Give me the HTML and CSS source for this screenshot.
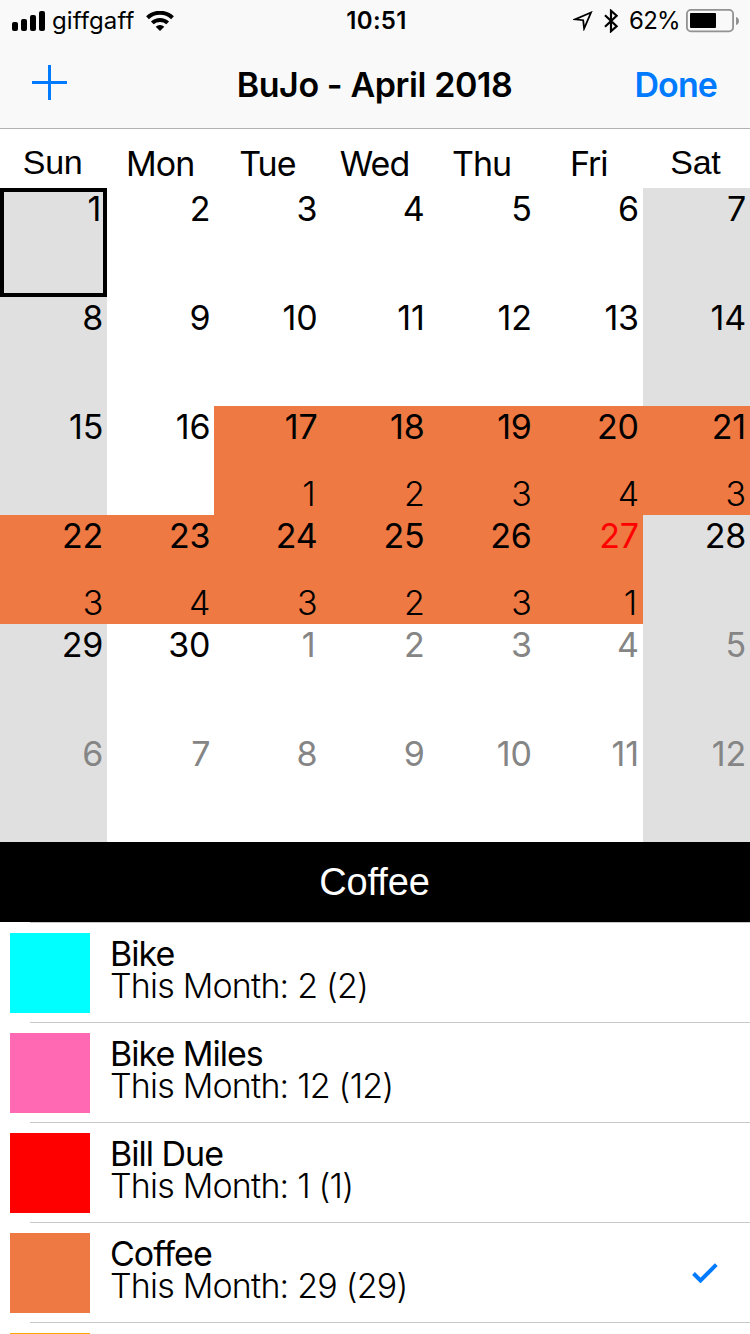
FILE: index.html
```html
<!DOCTYPE html>
<html lang="en">
<head>
    <meta charset="UTF-8">
    <meta name="viewport" content="width=device-width, initial-scale=1.0">
    <title>BuJo - April 2018</title>
    <link rel="stylesheet" href="styles.css">
</head>
<body>
    <!-- Top bar -->
    <header class="topbar">
        <div class="status">
            <div class="status-left">
                <svg class="signal" width="34" height="20" viewBox="0 0 34 20">
                    <rect x="0" y="11" width="6" height="9" rx="2"/>
                    <rect x="9" y="8" width="6" height="12" rx="2"/>
                    <rect x="18" y="4" width="6" height="16" rx="2"/>
                    <rect x="27" y="0" width="6" height="20" rx="2"/>
                </svg>
                <span class="carrier">giffgaff</span>
                <svg class="wifi" width="28" height="20" viewBox="0 0 28 20">
                    <path d="M1.5 6.8a18 18 0 0 1 25 0M6.3 11.9a11.4 11.4 0 0 1 15.4 0" fill="none" stroke="#000" stroke-width="4"/>
                    <path d="M14 20l-4.3-4.2a6.2 6.2 0 0 1 8.6 0z"/>
                </svg>
            </div>
            <span class="time">10:51</span>
            <div class="status-right">
                <svg class="location" width="20" height="20" viewBox="0 0 20 20">
                    <path d="M18 1.5L2 8.3l8.2.9.9 8.3z" fill="none" stroke="#000" stroke-width="1.8"/>
                </svg>
                <svg class="bluetooth" width="14" height="24" viewBox="0 0 14 24">
                    <path d="M1 6.2l11.6 11L7 22.2V1.8l5.6 5L1 17.8" fill="none" stroke="#000" stroke-width="2.2"/>
                </svg>
                <span class="percent">62%</span>
                <svg class="battery" width="54" height="24" viewBox="0 0 54 24">
                    <rect x="0.9" y="0.9" width="46.2" height="21.4" rx="4" fill="none" stroke="#929292" stroke-width="1.8"/>
                    <rect x="4" y="4" width="26" height="15" rx="1"/>
                    <path d="M50 8c4 1 4 7 0 8z" fill="#929292"/>
                </svg>
            </div>
        </div>
        <nav class="nav">
            <svg class="add" width="35" height="35" viewBox="0 0 35 35">
                <path d="M16 0h3v16h16v3H19v16h-3V19H0v-3h16z"/>
            </svg>
            <h1>BuJo - April 2018</h1>
            <a class="done">Done</a>
        </nav>
    </header>

    <!-- Calendar -->
    <div class="weekdays">
        <span class="weekend-name">Sun</span><span>Mon</span><span>Tue</span><span>Wed</span><span>Thu</span><span>Fri</span><span class="weekend-name">Sat</span>
    </div>
    <div class="calendar">
        <div class="day weekend selected"><b>1</b></div>
        <div class="day"><b>2</b></div>
        <div class="day"><b>3</b></div>
        <div class="day"><b>4</b></div>
        <div class="day"><b>5</b></div>
        <div class="day"><b>6</b></div>
        <div class="day weekend"><b>7</b></div>

        <div class="day weekend"><b>8</b></div>
        <div class="day"><b>9</b></div>
        <div class="day"><b>10</b></div>
        <div class="day"><b>11</b></div>
        <div class="day"><b>12</b></div>
        <div class="day"><b>13</b></div>
        <div class="day weekend"><b>14</b></div>

        <div class="day weekend"><b>15</b></div>
        <div class="day"><b>16</b></div>
        <div class="day marked"><b>17</b><i class="one">1</i></div>
        <div class="day marked"><b>18</b><i>2</i></div>
        <div class="day marked"><b>19</b><i>3</i></div>
        <div class="day marked"><b>20</b><i>4</i></div>
        <div class="day marked"><b>21</b><i>3</i></div>

        <div class="day marked"><b>22</b><i>3</i></div>
        <div class="day marked"><b>23</b><i>4</i></div>
        <div class="day marked"><b>24</b><i>3</i></div>
        <div class="day marked"><b>25</b><i>2</i></div>
        <div class="day marked"><b>26</b><i>3</i></div>
        <div class="day marked today"><b>27</b><i class="one">1</i></div>
        <div class="day weekend"><b>28</b></div>

        <div class="day weekend"><b>29</b></div>
        <div class="day"><b>30</b></div>
        <div class="day next"><b class="one">1</b></div>
        <div class="day next"><b>2</b></div>
        <div class="day next"><b>3</b></div>
        <div class="day next"><b>4</b></div>
        <div class="day weekend next"><b>5</b></div>

        <div class="day weekend next"><b>6</b></div>
        <div class="day next"><b>7</b></div>
        <div class="day next"><b>8</b></div>
        <div class="day next"><b>9</b></div>
        <div class="day next"><b>10</b></div>
        <div class="day next"><b>11</b></div>
        <div class="day weekend next"><b>12</b></div>
    </div>

    <!-- Trackers -->
    <h2>Coffee</h2>
    <ul class="trackers">
        <li>
            <div class="swatch bike"></div>
            <div class="info"><p class="name">Bike</p><p class="total">This Month: 2 (2)</p></div>
        </li>
        <li>
            <div class="swatch miles"></div>
            <div class="info"><p class="name">Bike Miles</p><p class="total">This Month: 12 (12)</p></div>
        </li>
        <li>
            <div class="swatch bill"></div>
            <div class="info"><p class="name">Bill Due</p><p class="total">This Month: 1 (1)</p></div>
        </li>
        <li>
            <div class="swatch coffee"></div>
            <div class="info"><p class="name">Coffee</p><p class="total">This Month: 29 (29)</p></div>
            <svg class="check" width="26" height="20" viewBox="0 0 26 20">
                <path d="M1.5 10.5l7 7L24.3 1.7" fill="none" stroke="#007aff" stroke-width="4"/>
            </svg>
        </li>
        <li>
            <div class="swatch amber"></div>
        </li>
    </ul>
</body>
</html>
```
FILE: styles.css
```css
* {
    margin: 0;
    padding: 0;
    box-sizing: border-box;
}

body {
    width: 750px;
    height: 1334px;
    overflow: hidden;
    background: #fff;
    color: #000;
    font-family: 'Inter', sans-serif;
    font-size: 34px;
}

svg {
    display: block;
    flex: none;
}

/* Top bar */
.topbar {
    height: 129px;
    background: #f9f9f9;
    border-bottom: 1px solid #b2b2b2;
}

.status {
    display: grid;
    grid-template-columns: 1fr auto 1fr;
    height: 40px;
    padding: 0 10px 0 12px;
    font-size: 24px;
    line-height: 41px;
}

.status-left,
.status-right {
    display: flex;
    align-items: center;
}

.status-right {
    justify-content: flex-end;
}

.carrier {
    margin-left: 6px;
    letter-spacing: 0.1px;
}

.wifi {
    margin-left: 12px;
}

.time {
    padding-left: 1px;
    font-weight: 600;
    letter-spacing: 0.3px;
}

.bluetooth {
    margin-left: 11px;
}

.percent {
    margin: 0 6px 0 11px;
    letter-spacing: -0.7px;
}

.nav {
    display: grid;
    grid-template-columns: 1fr auto 1fr;
    align-items: center;
    height: 88px;
    padding: 0 33px 0 32px;
}

.add {
    fill: #007aff;
    margin-bottom: 3px;
}

h1 {
    font-size: 34px;
    font-weight: 600;
    letter-spacing: -0.4px;
}

.done {
    justify-self: end;
    color: #007aff;
    font-weight: 600;
    letter-spacing: -0.9px;
}

/* Calendar */
.weekdays {
    display: grid;
    grid-template-columns: repeat(7, 1fr);
    height: 59px;
    padding-top: 14px;
    line-height: 41px;
    text-align: center;
    letter-spacing: -1px;
}

.weekdays span {
    padding-right: 1px;
}

.weekdays .weekend-name {
    padding-right: 2px;
    font-family: 'Liberation Sans', Arial, sans-serif;
    line-height: 38px;
    letter-spacing: -0.3px;
}

.calendar {
    display: grid;
    grid-template-columns: repeat(7, 1fr);
    grid-auto-rows: 109px;
}

.day {
    display: flex;
    flex-direction: column;
    justify-content: space-between;
    padding: 1px 4px 1px 0;
    line-height: 40px;
    text-align: right;
    letter-spacing: -0.2px;
}

.day b {
    font-weight: 400;
}

.day i {
    font-style: normal;
    font-weight: 300;
}

.day .one {
    padding-right: 2px;
}

.weekend {
    background: #e0e0e0;
}

.marked {
    background: #ee7942;
}

.selected {
    padding-right: 6px;
    box-shadow: inset 0 0 0 4px #000;
}

.today b {
    color: #f00;
}

.next {
    color: #858585;
}

/* Trackers */
h2 {
    height: 80px;
    padding-right: 1px;
    background: #000;
    color: #fff;
    font-family: 'Liberation Sans', Arial, sans-serif;
    font-size: 38px;
    font-weight: 400;
    line-height: 80px;
    text-align: center;
    letter-spacing: -0.1px;
}

.trackers {
    height: 412px;
    overflow: hidden;
    list-style: none;
}

.trackers li {
    display: flex;
    height: 100px;
    padding: 10px 32px 0 10px;
    background: linear-gradient(#c8c7cc, #c8c7cc) 30px 0 / 720px 1px no-repeat;
}

.swatch {
    width: 80px;
    height: 80px;
    margin-top: 1px;
}

.bike {
    background: #0ff;
}

.miles {
    background: #ff69b4;
}

.bill {
    background: #f00;
}

.coffee {
    background: #ee7942;
}

.amber {
    background: #ffa500;
}

.info {
    flex: 1;
    margin-left: 20px;
    padding-top: 6px;
    line-height: 32px;
}

.name {
    letter-spacing: -1px;
}

.total {
    font-weight: 300;
    letter-spacing: -0.8px;
}

.check {
    margin-top: 31px;
}
```
